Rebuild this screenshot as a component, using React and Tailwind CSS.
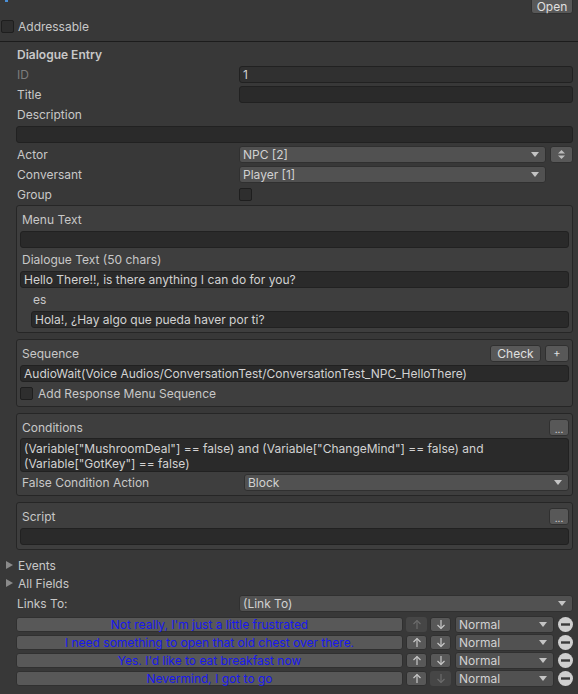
// Unity inspector: Dialogue Entry
const Arrow = () => (
  <svg width="8" height="5" viewBox="0 0 8 5" className="shrink-0">
    <polygon points="0,0 8,0 4,5" fill="#c4c4c4" />
  </svg>
);

function Field({ children, className = '' }) {
  return (
    <div
      className={`h-[17px] rounded-[3px] border border-[#212121] bg-[#2a2a2a] px-[3px] flex items-center text-[#d2d2d2] whitespace-nowrap overflow-hidden ${className}`}
    >
      {children}
    </div>
  );
}

function Popup({ value, className = '' }) {
  return (
    <div
      className={`h-[17px] rounded-[3px] border border-[#303030] bg-[#515151] flex items-center justify-between pl-[3px] pr-[6px] text-[#d2d2d2] ${className}`}
    >
      <span>{value}</span>
      <Arrow />
    </div>
  );
}

function Btn({ children, className = '' }) {
  return (
    <div
      className={`h-[17px] rounded-[3px] border border-[#303030] bg-[#585858] flex items-center justify-center text-[#e0e0e0] ${className}`}
    >
      {children}
    </div>
  );
}

const Checkbox = () => (
  <div className="w-[13px] h-[13px] rounded-[2px] border border-[#1e1e1e] bg-[#2e2e2e] shrink-0" />
);

function Row({ label, dim, children }) {
  return (
    <div className="h-[20px] flex items-center">
      <span className={`w-[223px] shrink-0 pl-[1px] ${dim ? 'text-[#7d7d7d]' : ''}`}>{label}</span>
      {children}
    </div>
  );
}

function Box({ children }) {
  return (
    <div className="mt-[6px] rounded-[3px] border border-[#262626] bg-[#3e3e3e] px-[3px] py-[3px]">
      {children}
    </div>
  );
}

const Foldout = ({ label }) => (
  <div className="h-[18px] flex items-center -ml-[10px]">
    <svg width="7" height="8" viewBox="0 0 7 8" className="mr-[5px]">
      <polygon points="0,0 7,4 0,8" fill="#8a8a8a" />
    </svg>
    <span>{label}</span>
  </div>
);

const MoveIcon = ({ down, off }) => (
  <svg width="10" height="11" viewBox="0 0 10 11">
    <g
      stroke={off ? '#6c6c6c' : '#c8c8c8'}
      strokeWidth="1.2"
      fill="none"
      transform={down ? 'rotate(180 5 5.5)' : undefined}
    >
      <line x1="5" y1="1.5" x2="5" y2="10" />
      <polyline points="1.5,5 5,1.5 8.5,5" />
    </g>
  </svg>
);

const links = [
  { text: "Not really, I'm just a little frustrated", upOff: true },
  { text: 'I need something to open that old chest over there.' },
  { text: "Yes. I'd like to eat breakfast now" },
  { text: 'Nevermind, I got to go', downOff: true },
];

export default function App() {
  return (
    <div className="w-[578px] h-[694px] overflow-hidden bg-[#383838] text-[#c8c8c8] text-[12px] leading-[15px] font-['Inter',sans-serif]">
      {/* top bar */}
      <div className="h-[41px] flex flex-col overflow-hidden">
        <div className="flex justify-between pr-[5px]">
          <div className="ml-[5px] w-[3px] h-[2px] bg-[#4a8fd6]" />
          <Btn className="w-[42px] h-[18px] -mt-[4px] pt-[2px]">Open</Btn>
        </div>
        <div className="flex items-center gap-[4px] pl-[1px] mt-[5px]">
          <Checkbox />
          <span>Addressable</span>
        </div>
      </div>
      <div className="h-px bg-[#1c1c1c]" />

      <div className="pl-[16px] pr-[5px] pt-[2px]">
        <div className="h-[20px] flex items-center pl-[1px] font-semibold">Dialogue Entry</div>
        <Row label="ID" dim>
          <Field className="flex-1 bg-[#303030] border-[#2a2a2a] text-[#7d7d7d]">1</Field>
        </Row>
        <Row label="Title">
          <Field className="flex-1" />
        </Row>
        <div className="h-[20px] flex items-center pl-[1px]">Description</div>
        <div className="h-[20px] flex items-center">
          <Field className="flex-1" />
        </div>
        <Row label="Actor">
          <Popup value="NPC [2]" className="w-[307px]" />
          <Btn className="ml-[4px] w-[23px]">
            <svg width="7" height="9" viewBox="0 0 7 9">
              <polygon points="3.5,0 7,3.5 0,3.5" fill="#bdbdbd" />
              <polygon points="0,5.5 7,5.5 3.5,9" fill="#bdbdbd" />
            </svg>
          </Btn>
        </Row>
        <Row label="Conversant">
          <Popup value="Player [1]" className="w-[307px]" />
        </Row>
        <Row label="Group">
          <Checkbox />
        </Row>

        <div className="-mt-[5px]">
          <Box>
            <div className="h-[20px] flex items-center pl-[2px]">Menu Text</div>
            <div className="h-[20px] flex items-center">
              <Field className="flex-1" />
            </div>
            <div className="h-[20px] flex items-center pl-[2px]">Dialogue Text (50 chars)</div>
            <div className="h-[20px] flex items-center">
              <Field className="flex-1">Hello There!!, is there anything I can do for you?</Field>
            </div>
            <div className="h-[20px] flex items-center pl-[13px]">es</div>
            <div className="h-[20px] flex items-center pl-[11px]">
              <Field className="flex-1">Hola!, ¿Hay algo que pueda haver por ti?</Field>
            </div>
          </Box>
        </div>

        <Box>
          <div className="h-[20px] flex items-center pl-[2px]">
            <span className="flex-1">Sequence</span>
            <Btn className="w-[51px] h-[16px]">Check</Btn>
            <Btn className="w-[24px] h-[16px] ml-[4px] text-[11px]">+</Btn>
          </div>
          <div className="h-[20px] flex items-center">
            <Field className="flex-1">AudioWait(Voice Audios/ConversationTest/ConversationTest_NPC_HelloThere)</Field>
          </div>
          <div className="h-[20px] flex items-center gap-[5px]">
            <Checkbox />
            <span>Add Response Menu Sequence</span>
          </div>
        </Box>

        <Box>
          <div className="h-[20px] flex items-center pl-[2px]">
            <span className="flex-1">Conditions</span>
            <Btn className="w-[20px] h-[16px] items-end pb-[2px] text-[10px] leading-[8px]">...</Btn>
          </div>
          <div className="mt-px h-[34px] rounded-[3px] border border-[#212121] bg-[#2a2a2a] px-[3px] pt-[2px] text-[#d2d2d2]">
            <div>(Variable["MushroomDeal"] == false) and (Variable["ChangeMind"] == false) and</div>
            <div>(Variable["GotKey"] == false)</div>
          </div>
          <div className="h-[20px] flex items-center">
            <span className="w-[224px] shrink-0 pl-[2px]">False Condition Action</span>
            <Popup value="Block" className="flex-1" />
          </div>
        </Box>

        <Box>
          <div className="h-[20px] flex items-center pl-[2px]">
            <span className="flex-1">Script</span>
            <Btn className="w-[20px] h-[16px] items-end pb-[2px] text-[10px] leading-[8px]">...</Btn>
          </div>
          <div className="h-[20px] flex items-center">
            <Field className="flex-1" />
          </div>
        </Box>

        <div className="mt-[6px]">
          <Foldout label="Events" />
          <Foldout label="All Fields" />
        </div>
        <div className="mt-px">
          <Row label="Links To:">
            <Popup value="(Link To)" className="flex-1 h-[16px]" />
          </Row>
        </div>

        <div className="mt-[2px]">
          {links.map((l) => (
            <div key={l.text} className="h-[18px] flex items-center">
              <div className="w-[387px] h-[15px] rounded-[3px] border border-[#303030] bg-[#585858] flex items-center justify-center text-[#1818ee]">
                {l.text}
              </div>
              <div
                className={`ml-[3px] w-[21px] h-[15px] rounded-[3px] flex items-center justify-center ${l.upOff ? 'bg-[#464646]' : 'bg-[#585858] border border-[#303030]'}`}
              >
                <MoveIcon off={l.upOff} />
              </div>
              <div
                className={`ml-[3px] w-[21px] h-[15px] rounded-[3px] flex items-center justify-center ${l.downOff ? 'bg-[#464646]' : 'bg-[#585858] border border-[#303030]'}`}
              >
                <MoveIcon down off={l.downOff} />
              </div>
              <Popup value="Normal" className="ml-[4px] w-[99px] h-[15px] text-[12px]" />
              <svg width="15" height="15" viewBox="0 0 15 15" className="ml-[4px]">
                <circle cx="7.5" cy="7.5" r="7.5" fill="#cfcfcf" />
                <rect x="3" y="6.3" width="9" height="2.4" fill="#3a3a3a" />
              </svg>
            </div>
          ))}
        </div>
      </div>
    </div>
  );
}
